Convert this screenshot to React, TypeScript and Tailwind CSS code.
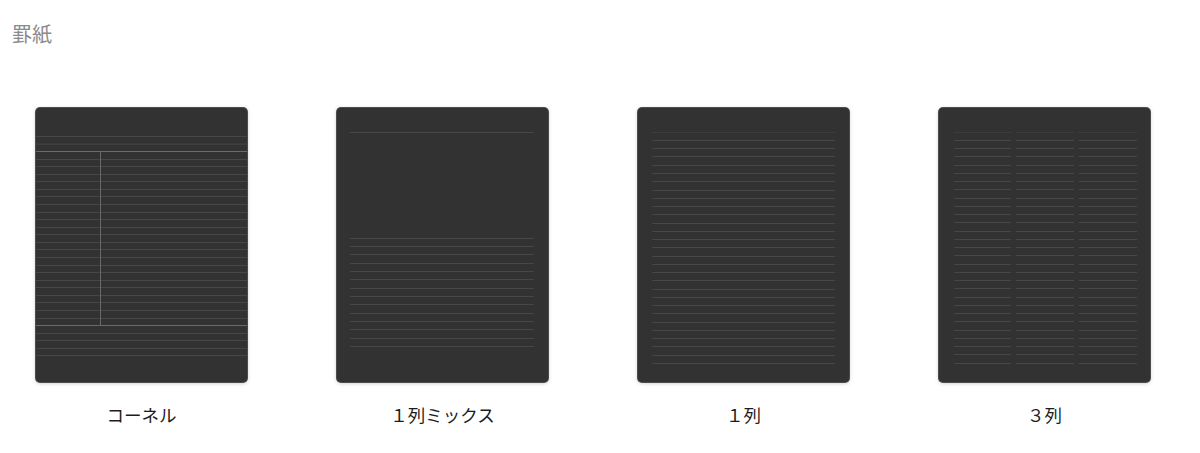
import React from "react";

const W = 211;
const H = 274;
const LINE = "#474747";
const BOLD = "#6a6a6a";

const range = (start: number, step: number, count: number) =>
  Array.from({ length: count }, (_, i) => start + i * step);

const Cornell = () => (
  <svg width={W} height={H} className="block">
    {[28, 35.6].map((y) => (
      <line key={y} x1={0} x2={W} y1={y + 0.5} y2={y + 0.5} stroke={LINE} />
    ))}
    {range(50.6, 7.57, 22).map((y) => (
      <line key={y} x1={0} x2={W} y1={Math.round(y) + 0.5} y2={Math.round(y) + 0.5} stroke={LINE} />
    ))}
    {range(224.6, 7.6, 4).map((y) => (
      <line key={y} x1={0} x2={W} y1={Math.round(y) + 0.5} y2={Math.round(y) + 0.5} stroke={LINE} />
    ))}
    <line x1={0} x2={W} y1={43.5} y2={43.5} stroke={BOLD} />
    <line x1={0} x2={W} y1={217.5} y2={217.5} stroke={BOLD} />
    <line x1={64.5} x2={64.5} y1={43} y2={217} stroke={BOLD} />
  </svg>
);

const Mix = () => (
  <svg width={W} height={H} className="block">
    <line x1={13} x2={197} y1={24.5} y2={24.5} stroke={LINE} />
    {range(129.7, 8.33, 14).map((y) => (
      <line key={y} x1={13} x2={197} y1={Math.round(y) + 0.5} y2={Math.round(y) + 0.5} stroke={LINE} />
    ))}
  </svg>
);

const OneCol = () => (
  <svg width={W} height={H} className="block">
    {range(23.7, 8.26, 29).map((y, i) => (
      <line
        key={y}
        x1={14}
        x2={197}
        y1={Math.round(y) + 0.5}
        y2={Math.round(y) + 0.5}
        stroke={i === 0 ? "#3d3d3d" : LINE}
      />
    ))}
  </svg>
);

const ThreeCol = () => (
  <svg width={W} height={H} className="block">
    {range(23.7, 8.25, 29).map((y, i) =>
      [
        [15, 72],
        [77, 135],
        [140, 198],
      ].map(([a, b]) => (
        <line
          key={`${y}-${a}`}
          x1={a}
          x2={b}
          y1={Math.round(y) + 0.5}
          y2={Math.round(y) + 0.5}
          stroke={i === 0 ? "#3d3d3d" : LINE}
        />
      ))
    )}
  </svg>
);

const papers = [
  { label: "コーネル", Drawing: Cornell },
  { label: "１列ミックス", Drawing: Mix },
  { label: "１列", Drawing: OneCol },
  { label: "３列", Drawing: ThreeCol },
];

export default function App() {
  return (
    <div
      className="w-[1200px] h-[453px] bg-white overflow-hidden"
      style={{ fontFamily: '"Noto Sans CJK JP", "Noto Sans", sans-serif' }}
    >
      <h1 className="pl-[12px] pt-[20px] text-[20px] leading-[28px] text-[#8a8a8a] font-normal">
        罫紙
      </h1>
      <div className="flex gap-[90px] pl-[36px] mt-[60px]">
        {papers.map(({ label, Drawing }) => (
          <div key={label} className="flex flex-col items-center w-[211px]">
            <div className="w-[211px] h-[274px] rounded-[4px] bg-[#323232] overflow-hidden shadow-[0_0_0_1px_#4c4c4c,0_1px_4px_rgba(0,0,0,0.25)]">
              <Drawing />
            </div>
            <div className="mt-[21px] text-[17.5px] leading-[24px] text-[#1c1c1c]">
              {label}
            </div>
          </div>
        ))}
      </div>
    </div>
  );
}
